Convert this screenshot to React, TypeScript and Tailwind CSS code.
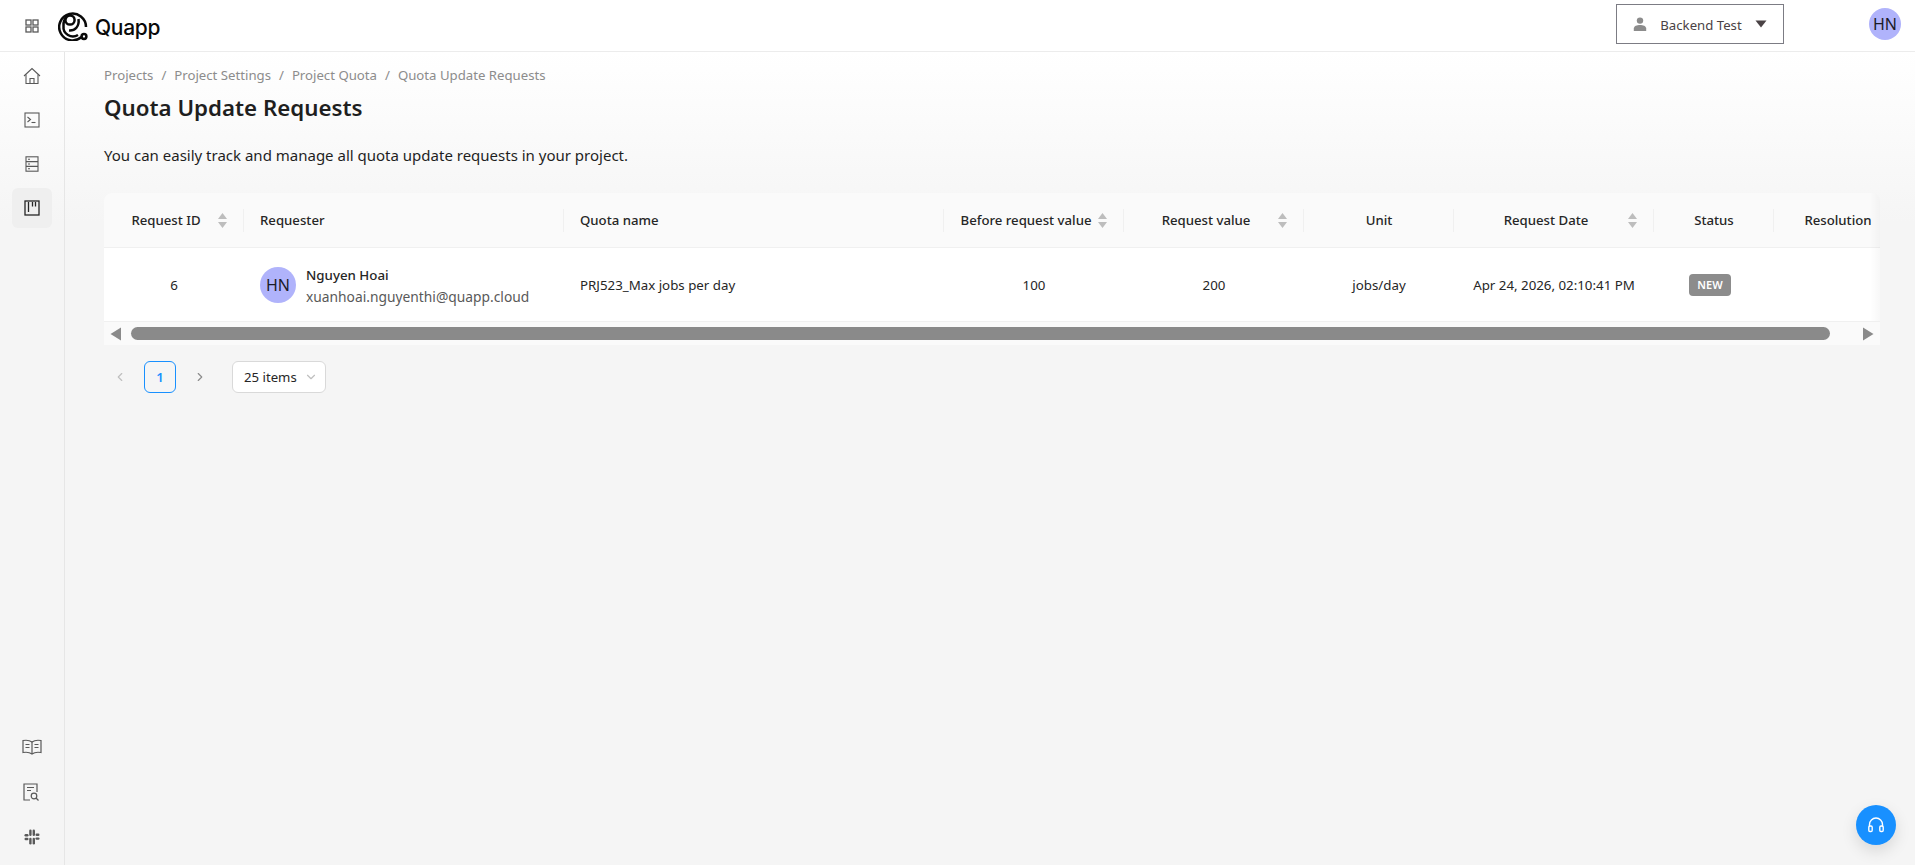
import { ChevronDown, ChevronLeft, ChevronRight } from "lucide-react";

const font = "font-['Noto_Sans',sans-serif]";

const columns = [
  { label: "Request ID", sort: true, align: "center" },
  { label: "Requester", sort: false, align: "left" },
  { label: "Quota name", sort: false, align: "left" },
  { label: "Before request value", sort: true, align: "center" },
  { label: "Request value", sort: true, align: "center" },
  { label: "Unit", sort: false, align: "center" },
  { label: "Request Date", sort: true, align: "center" },
  { label: "Status", sort: false, align: "center" },
  { label: "Resolution", sort: false, align: "center" },
];

const GRID = "grid grid-cols-[140px_320px_380px_180px_180px_150px_200px_120px_128px] w-[1798px]";

const SortIcon = () => (
  <svg width="9" height="17" viewBox="0 0 9 17" className="block">
    <path d="M4.5 1 L9 7 H0 Z" fill="#bdbdbd" />
    <path d="M4.5 16 L9 10 H0 Z" fill="#bdbdbd" />
  </svg>
);

const Avatar = ({ size }: { size: string }) => (
  <div className={`${size} rounded-full bg-[#b0b3fb] flex items-center justify-center text-[16px] text-[#1c1c28] shrink-0`}>
    HN
  </div>
);

const Logo = () => (
  <svg width="30" height="30" viewBox="0 0 30 30" fill="none" stroke="#0a0a0a" strokeWidth="2.5">
    <path d="M23.5 26 A13.4 13.4 0 1 1 28 16" />
    <path d="M20 24 A9.5 9.5 0 0 1 5.5 15 C5.2 11 6.5 8 8.5 6.5" />
    <circle cx="12" cy="9" r="4.6" />
    <path d="M11 19.5 C17 20 21.5 15.5 20.5 8" />
    <circle cx="26" cy="25.5" r="2.4" />
  </svg>
);

const GridIcon = () => (
  <svg width="14" height="14" viewBox="0 0 14 14" fill="none" stroke="#595959" strokeWidth="1.3">
    <rect x="1" y="1" width="5" height="5" />
    <rect x="8" y="1" width="5" height="5" />
    <rect x="1" y="8" width="5" height="5" />
    <rect x="8" y="8" width="5" height="5" />
  </svg>
);

const HomeIcon = () => (
  <svg width="18" height="18" viewBox="0 0 18 18" fill="none" stroke="#595959" strokeWidth="1.1">
    <path d="M1 9 L9 1.5 L17 9" />
    <path d="M3 7.5 V16.5 H15 V7.5" />
    <path d="M7 16.5 V11.5 H11 V16.5" />
  </svg>
);

const TerminalIcon = () => (
  <svg width="16" height="16" viewBox="0 0 16 16" fill="none" stroke="#595959" strokeWidth="1.1">
    <rect x="1" y="1" width="14" height="14" />
    <path d="M3.5 5 L6.5 7.5 L3.5 10" />
    <path d="M7.5 10.5 H11.5" />
  </svg>
);

const ServerIcon = () => (
  <svg width="14" height="16" viewBox="0 0 14 16" fill="none" stroke="#595959" strokeWidth="1.1">
    <rect x="1" y="0.8" width="12" height="14.4" />
    <path d="M1 5.6 H13 M1 10.4 H13" />
    <path d="M3 3.2 H5 M3 8 H5 M3 12.8 H5" />
  </svg>
);

const BoardIcon = () => (
  <svg width="16" height="16" viewBox="0 0 16 16" fill="none" stroke="#262626" strokeWidth="1.3">
    <rect x="1" y="1" width="14" height="14" />
    <path d="M4.5 2 V12 M8.5 2 V6.5 M11.5 2 V6.5" />
  </svg>
);

const BookIcon = () => (
  <svg width="20" height="16" viewBox="0 0 20 16" fill="none" stroke="#595959" strokeWidth="1.2">
    <path d="M10 3 C8 1.5 4 1 1 1.5 V13.5 C4 13 8 13.5 10 15 C12 13.5 16 13 19 13.5 V1.5 C16 1 12 1.5 10 3 Z" />
    <path d="M10 3 V15" />
    <path d="M3.5 5.5 H7.5 M3.5 8.5 H7.5 M12.5 5.5 H16.5 M12.5 8.5 H16.5" />
  </svg>
);

const ReportSearchIcon = () => (
  <svg width="17" height="18" viewBox="0 0 17 18" fill="none" stroke="#595959" strokeWidth="1.2">
    <path d="M7 17 H1 V1 H14 V9" />
    <path d="M4 4.5 H11 M4 7.5 H8" />
    <circle cx="11" cy="13" r="2.8" />
    <path d="M13 15 L15.5 17.5" />
  </svg>
);

const SlackIcon = () => (
  <svg width="16" height="16" viewBox="0 0 16 16" fill="#595959">
    <rect x="5.2" y="0.5" width="2.4" height="6.4" rx="1.2" />
    <rect x="0.5" y="5" width="4" height="2.4" rx="1.2" />
    <rect x="8.6" y="0.5" width="2.4" height="6.4" rx="1.2" />
    <rect x="11.5" y="4.6" width="4" height="2.4" rx="1.2" />
    <rect x="0.5" y="8.8" width="4" height="2.4" rx="1.2" />
    <rect x="5.2" y="8.8" width="2.4" height="6.6" rx="1.2" />
    <rect x="8.6" y="8.8" width="2.4" height="6.6" rx="1.2" />
    <rect x="11.5" y="8.4" width="4" height="2.4" rx="1.2" />
  </svg>
);

const HeadsetIcon = () => (
  <svg width="18" height="18" viewBox="0 0 18 18" fill="none" stroke="#ffffff" strokeWidth="1.4">
    <path d="M2.5 11 V8.5 A6.5 6.5 0 0 1 15.5 8.5 V11" />
    <rect x="1.8" y="10" width="3.4" height="5.5" rx="1.2" />
    <rect x="12.8" y="10" width="3.4" height="5.5" rx="1.2" />
  </svg>
);

const SideItem = ({ children, active }: { children: React.ReactNode; active?: boolean }) => (
  <div className={`w-10 h-10 rounded-md flex items-center justify-center ${active ? "bg-[#efefef]" : ""}`}>
    {children}
  </div>
);

const App = () => {
  return (
    <div className={`${font} h-screen w-full overflow-hidden flex flex-col bg-[#f5f5f5] text-[#262626]`}>
      <header className="h-[52px] shrink-0 bg-white border-b border-[#ececec] flex items-center pl-[25px] pr-[14px]">
        <GridIcon />
        <div className="ml-[19px] flex items-center">
          <Logo />
          <span className="ml-[7px] mt-[4px] text-[21px] font-['Inter',sans-serif] font-medium text-[#0a0a0a] tracking-[-0.3px]">
            Quapp
          </span>
        </div>
        <div className="ml-auto flex items-center">
          <button className="w-[168px] h-[40px] -mt-[3px] border border-[#7c7c84] flex items-center justify-center gap-[13px] text-[13.2px] text-[#4a4245]">
            <svg width="14" height="14" viewBox="0 0 14 14" fill="#8c8c8c">
              <circle cx="7" cy="3.6" r="3.2" />
              <path d="M0.8 14 V11.5 C0.8 9 4 7.9 7 7.9 C10 7.9 13.2 9 13.2 11.5 V14 Z" />
            </svg>
            <span className="pt-[3px]">Backend Test</span>
            <svg width="12" height="8" viewBox="0 0 12 8" fill="#4a4245">
              <path d="M0.5 0.5 H11.5 L6 7.5 Z" />
            </svg>
          </button>
          <div className="ml-[85px] -mt-[3px]">
            <Avatar size="w-8 h-8" />
          </div>
        </div>
      </header>

      <div className="flex-1 flex min-h-0 bg-[linear-gradient(180deg,#ffffff_0,#f5f5f5_170px)]">
        <aside className="w-[65px] shrink-0 border-r border-[#e6e6e6] flex flex-col items-center pt-[4px] pb-[8px] pr-[1px]">
          <div className="flex flex-col gap-1">
            <SideItem><HomeIcon /></SideItem>
            <SideItem><TerminalIcon /></SideItem>
            <SideItem><ServerIcon /></SideItem>
            <SideItem active><BoardIcon /></SideItem>
          </div>
          <div className="mt-auto flex flex-col gap-[5px]">
            <SideItem><BookIcon /></SideItem>
            <SideItem><ReportSearchIcon /></SideItem>
            <SideItem><SlackIcon /></SideItem>
          </div>
        </aside>

        <main className="flex-1 min-w-0 pl-[39px] pr-[35px]">
          <nav className="mt-[13px] flex items-center gap-[8px] text-[13.2px] leading-5 text-[#8c8c8c]">
            <span>Projects</span>
            <span>/</span>
            <span>Project Settings</span>
            <span>/</span>
            <span>Project Quota</span>
            <span>/</span>
            <span>Quota Update Requests</span>
          </nav>
          <h1 className="mt-[5px] text-[22.3px] leading-9 font-semibold text-[#1f1f1f]">Quota Update Requests</h1>
          <p className="mt-[17px] text-[15px] leading-6 text-[#1f1f1f]">
            You can easily track and manage all quota update requests in your project.
          </p>

          <div className="mt-[26px] rounded-t-lg overflow-hidden bg-[#fafafa] relative">
            <div className={`${GRID} h-[55px] border-b border-[#f0f0f0] text-[13.2px] font-medium text-[#262626]`}>
              {columns.map((col, i) => (
                <div
                  key={col.label}
                  className={`relative flex items-center whitespace-nowrap pl-4 pt-[2px] ${col.sort ? "pr-8" : "pr-4"} ${col.align === "center" ? "justify-center" : ""}`}
                >
                  {col.label}
                  {col.sort && (
                    <span className="absolute right-[17px] top-[19px]">
                      <SortIcon />
                    </span>
                  )}
                  {i < columns.length - 1 && (
                    <span className="absolute right-0 top-[16px] h-[23px] w-px bg-[#f0f0f0]" />
                  )}
                </div>
              ))}
            </div>
            <div className={`${GRID} h-[74px] bg-white border-b border-[#f0f0f0] text-[13.3px] text-[#262626]`}>
              <div className="flex items-center justify-center pt-[2px]">6</div>
              <div className="flex items-center gap-[10px] px-4">
                <Avatar size="w-9 h-9" />
                <div className="leading-[21px] whitespace-nowrap pt-[2px]">
                  <div className="font-medium">Nguyen Hoai</div>
                  <div className="text-[13.8px] text-[#595959]">xuanhoai.nguyenthi@quapp.cloud</div>
                </div>
              </div>
              <div className="flex items-center px-4 pt-[2px]">PRJ523_Max jobs per day</div>
              <div className="flex items-center justify-center pt-[2px]">100</div>
              <div className="flex items-center justify-center pt-[2px]">200</div>
              <div className="flex items-center justify-center pt-[2px]">jobs/day</div>
              <div className="flex items-center justify-center whitespace-nowrap pt-[2px]">Apr 24, 2026, 02:10:41 PM</div>
              <div className="flex items-center pl-[35px]">
                <span className="w-[42px] h-[22px] leading-[22px] text-center rounded bg-[#8c8c8c] text-white text-[11px] font-semibold">
                  NEW
                </span>
              </div>
              <div />
            </div>
            {/* scrollbar */}
            <div className="h-[23px] bg-[#fafafa] flex items-center pl-[6px] pr-[6px]">
              <svg width="12" height="14" viewBox="0 0 12 14" fill="#8a8a8a">
                <path d="M11 0.5 V13.5 L0.5 7 Z" />
              </svg>
              <div className="ml-[9px] w-[1699px] h-[13px] rounded-full bg-[#8a8a8a]" />
              <svg className="ml-auto" width="12" height="14" viewBox="0 0 12 14" fill="#8a8a8a">
                <path d="M1 0.5 V13.5 L11.5 7 Z" />
              </svg>
            </div>
            <div className="absolute right-0 top-0 h-[128px] w-[10px] bg-gradient-to-r from-transparent to-black/[0.03]" />
          </div>

          <div className="mt-[16px] flex items-center text-[13.2px]">
            <div className="w-8 h-8 flex items-center justify-center text-[#bfbfbf]">
              <ChevronLeft size={14} />
            </div>
            <div className="ml-[8px] w-8 h-8 rounded-md border border-[#1890ff] text-[#1890ff] font-semibold flex items-center justify-center pt-[2px]">
              1
            </div>
            <div className="ml-[8px] w-8 h-8 flex items-center justify-center text-[#8c8c8c]">
              <ChevronRight size={14} />
            </div>
            <div className="ml-[16px] w-[94px] h-8 rounded-md border border-[#d9d9d9] bg-white flex items-center pl-[11px] text-[#262626]">
              <span className="pt-[2px]">25 items</span>
              <ChevronDown size={14} className="ml-[7px] text-[#bfbfbf]" />
            </div>
          </div>
        </main>
      </div>

      <button className="fixed right-[19px] bottom-[20px] w-10 h-10 rounded-full bg-[#1890ff] shadow-[0_6px_16px_rgba(0,0,0,0.12)] flex items-center justify-center">
        <HeadsetIcon />
      </button>
    </div>
  );
};

export default App;
